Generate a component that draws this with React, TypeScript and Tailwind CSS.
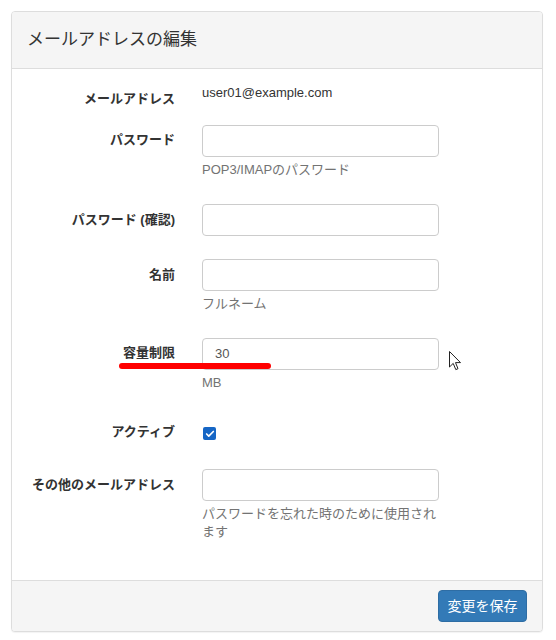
import { Check } from 'lucide-react'

const font = { fontFamily: '"Liberation Sans", "Noto Sans CJK JP", sans-serif' }

function Label({ text, pt }: { text: string; pt: string }) {
  return (
    <div className={`w-[163px] shrink-0 text-right text-[13px] leading-[20px] font-bold text-[#333] ${pt}`}>
      {text}
    </div>
  )
}

function TextInput({ value }: { value?: string }) {
  return (
    <div className="h-[32px] w-[237px] rounded-[4px] border border-[#cccccc] bg-white pl-[12px] text-[13px] leading-[30px] text-[#555]">
      {value}
    </div>
  )
}

function Help({ children, mt = 'mt-[3px]' }: { children: React.ReactNode; mt?: string }) {
  return <div className={`${mt} text-[13px] leading-[20px] text-[#737373]`}>{children}</div>
}

function Cursor() {
  return (
    <svg width="13" height="20" viewBox="0 0 13 20" className="absolute left-[449px] top-[351px]">
      <path
        d="M0.5 0.5 L0.5 16 L4.2 12.4 L6.8 18.6 L9 17.7 L6.5 11.6 L11.5 11.6 Z"
        fill="white"
        stroke="#222"
        strokeWidth="1"
        strokeLinejoin="round"
      />
    </svg>
  )
}

export default function App() {
  return (
    <div className="relative h-[640px] w-[556px] bg-white pl-[11px] pt-[11px]" style={font}>
      <div className="w-[532px] overflow-hidden rounded-[4px] border border-[#dddddd] bg-white shadow-[0_1px_1px_rgba(0,0,0,0.05)]">
        <div className="flex h-[57px] items-center border-b border-[#dddddd] bg-[#f5f5f5] px-[15px] text-[17px] text-[#333]">
          メールアドレスの編集
        </div>

        <div className="pb-[39px] pt-[14px]">
          <div className="flex">
            <Label text="メールアドレス" pt="pt-[6px]" />
            <div className="ml-[27px] text-[13px] leading-[20px] text-[#333]">user01@example.com</div>
          </div>

          <div className="mt-[16px] flex">
            <Label text="パスワード" pt="pt-[5px]" />
            <div className="ml-[27px]">
              <TextInput />
              <Help>POP3/IMAPのパスワード</Help>
            </div>
          </div>

          <div className="mt-[24px] flex">
            <Label text="パスワード (確認)" pt="pt-[6px]" />
            <div className="ml-[27px]">
              <TextInput />
            </div>
          </div>

          <div className="mt-[23px] flex">
            <Label text="名前" pt="pt-[6px]" />
            <div className="ml-[27px]">
              <TextInput />
              <Help>フルネーム</Help>
            </div>
          </div>

          <div className="mt-[24px] flex">
            <Label text="容量制限" pt="pt-[5px]" />
            <div className="ml-[27px]">
              <TextInput value="30" />
              <Help>MB</Help>
            </div>
          </div>

          <div className="mt-[29px] flex">
            <Label text="アクティブ" pt="pt-0" />
            <div className="ml-[28px] pt-[5px]">
              <span className="flex h-[13px] w-[13px] items-center justify-center rounded-[2px] bg-[#1666c5]">
                <Check className="h-[10px] w-[10px] text-white" strokeWidth={4} />
              </span>
            </div>
          </div>

          <div className="mt-[27px] flex">
            <Label text="その他のメールアドレス" pt="pt-[6px]" />
            <div className="ml-[27px]">
              <TextInput />
              <Help mt="mt-[4px]">
                <div className="w-[237px] leading-[18px]">パスワードを忘れた時のために使用されます</div>
              </Help>
            </div>
          </div>
        </div>

        <div className="flex h-[51px] items-center justify-end border-t border-[#dddddd] bg-[#f5f5f5] pr-[15px]">
          <button className="h-[32px] w-[89px] rounded-[4px] border border-[#2e6da4] bg-[#337ab7] text-[14px] text-white">
            変更を保存
          </button>
        </div>
      </div>

      <div className="absolute left-[119px] top-[363px] h-[6px] w-[152px] rounded-full bg-[#ff0000]" />
      <Cursor />
    </div>
  )
}
